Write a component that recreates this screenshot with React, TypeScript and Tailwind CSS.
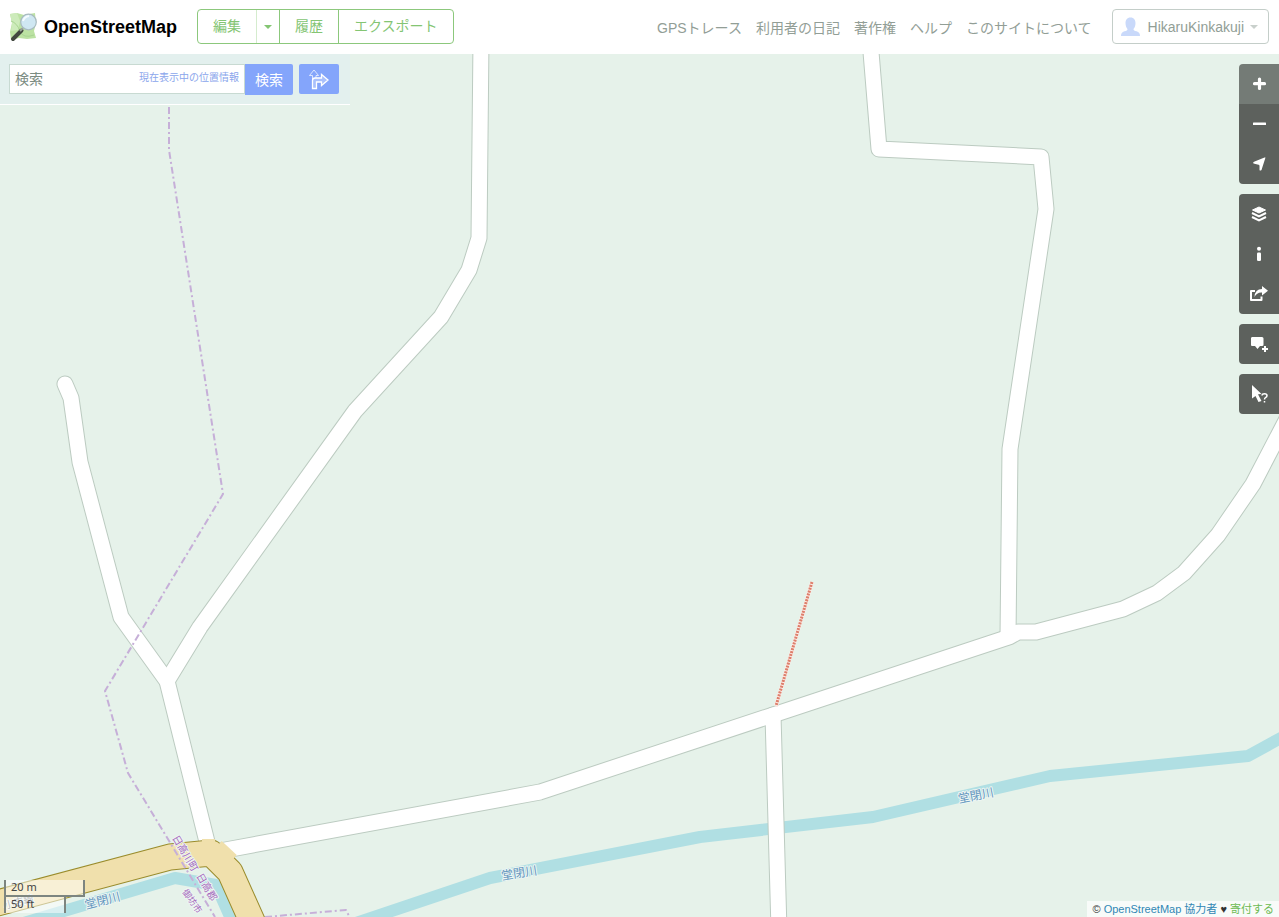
import type { ReactNode } from "react";

const navLinks = ["GPSトレース", "利用者の日記", "著作権", "ヘルプ", "このサイトについて"];

// minor roads, drawn twice: once as casing, once as fill
const roads = [
  "M481 40 L479 238 L469 270 L441 317 L355 411 L200 627 L167 681",
  "M65 384 L71 398 L80 462 L121 617 L167 681 L209 850",
  "M220 851 L540 792 L773 715 L1009 637 L1018 632 L1036 632 L1123 609 L1157 593 L1184 573 L1218 535 L1253 484 L1290 413",
  "M870 40 L879 149 L1041 157 L1046 209 L1010 449 L1008 637",
  "M773 715 L779 930",
];

const river = "M350 925 L490 878 L700 837 L873 817 L1050 776 L1248 756 L1290 733";
const stream = "M0 930 L175 878 L216 885 L236 930";
const highway = "M-10 905 L170 857 L211 853 L230 872 L256 930";

function MapCanvas() {
  return (
    <svg
      className="absolute inset-0 h-full w-full"
      viewBox="0 54 1279 863"
      preserveAspectRatio="xMinYMin slice"
      fill="none"
      strokeLinejoin="round"
      aria-label="地図"
    >
      <rect y="54" width="1279" height="863" fill="#e6f2ea" />

      {/* Water */}
      <g stroke="#b0dfe3" strokeWidth="12">
        <path d={river} />
        <path d={stream} />
      </g>

      {/* Roads */}
      <g strokeLinecap="round">
        {roads.map((d) => (
          <path key={d} d={d} stroke="#bccbc1" strokeWidth="17" />
        ))}
        {roads.map((d) => (
          <path key={d} d={d} stroke="#fff" strokeWidth="15" />
        ))}
      </g>
      <path d={highway} stroke="#9a8c2c" strokeWidth="27" />
      <path d={highway} stroke="#f0e0ac" strokeWidth="25" />
      <path d="M202 843 L215 843 M219 844 L234 858" stroke="#f0e0ac" strokeWidth="8" />

      {/* Footpath */}
      <path d="M812 582 L776 706" stroke="#fbeee8" strokeWidth="4" />
      <path d="M812 582 L776 706" stroke="#dd7f6c" strokeWidth="3" strokeDasharray="2 1" />

      {/* Boundaries */}
      <g stroke="#c6afd8" strokeWidth="2" strokeDasharray="7 3 2 3">
        <path d="M169 107 L169 150 L223 494 L105 691 L128 773 L215 917" />
        <path d="M265 917 L346 910 L351 920" />
      </g>

      <g
        className="font-['Noto_Sans_CJK_JP',sans-serif]"
        stroke="#eef6f3"
        strokeWidth="2"
        paintOrder="stroke"
        fontSize="12"
      >
        <g fill="#6497bf">
          <text x="502" y="880" transform="rotate(-9 502 880)">堂閉川</text>
          <text x="959" y="803" transform="rotate(-11 959 803)">堂閉川</text>
          <text x="86" y="909" transform="rotate(-14 86 909)">堂閉川</text>
        </g>
        <g fill="#a569bd" fontSize="10">
          <text x="172" y="838" transform="rotate(59 172 838)">日高川町</text>
          <text x="196" y="876" transform="rotate(59 196 876)">日高郡</text>
          <text x="182" y="892" transform="rotate(55 182 892)" fontSize="9">御坊市</text>
        </g>
        <text x="5" y="909" fill="#777" fontSize="10" transform="rotate(-14 5 909)">小吉線</text>
      </g>
    </svg>
  );
}

function Logo() {
  return (
    <svg width="30" height="32" viewBox="0 0 30 32" aria-hidden="true">
      <path d="M2 3 L9 2 L16 4 L27 2 L28 12 L26 20 L28 27 L19 28 L11 27 L3 29 L2 21 L4 12 Z" fill="#bce2a3" />
      <path d="M2 3 L9 2 L12 10 L10 19 L3 20 L4 12 Z" fill="#cdebbb" />
      <path d="M3 10 Q9 12 12 20 T26 24" fill="none" stroke="#a9d592" />
      <path d="M13.500 19.500 L5 28" stroke="#424840" strokeWidth="4" strokeLinecap="round" />
      <path d="M15 17 L12 20" stroke="#9aa39a" strokeWidth="2" />
      <circle cx="20.500" cy="11" r="7.800" fill="#cfe7f2" stroke="#a9bbc0" strokeWidth="1.200" />
      <path d="M15 10 Q16 6 21 5" fill="none" stroke="#f4fbff" strokeWidth="2" />
    </svg>
  );
}

function Caret({ className }: { className?: string }) {
  return (
    <svg className={className} width="8" height="4" viewBox="0 0 8 4" fill="currentColor" aria-hidden="true">
      <path d="M0 0 H8 L4 4 Z" />
    </svg>
  );
}

function Header() {
  return (
    <header className="flex h-[54px] shrink-0 items-center bg-white pr-2.5 pb-px pl-2">
      <h1>
        <a href="#" className="flex items-center gap-1.5 text-lg font-bold text-black">
          <Logo />
          OpenStreetMap
        </a>
      </h1>
      <div className="ml-5 flex h-[35px] shrink-0 divide-x divide-[#8cc87c] rounded-sm border border-[#8cc87c] text-sm text-[#84c573]">
        <button className="border-r-[#d5ecce] px-[15px] pb-0.5">編集</button>
        <button className="px-[7px]" aria-label="編集メニュー">
          <Caret />
        </button>
        <button className="px-[15px] pb-0.5">履歴</button>
        <button className="px-[15px] pb-0.5">エクスポート</button>
      </div>
      <nav className="ml-auto flex shrink-0 gap-3.5 pt-0.5 text-sm text-[#929e96]">
        {navLinks.map((label) => (
          <a key={label} href="#">
            {label}
          </a>
        ))}
      </nav>
      <button className="ml-5 flex h-[35px] shrink-0 items-center rounded-sm border border-[#c4cec9] pr-2.5 pl-2 text-sm text-[#929e96]">
        <svg className="mr-2" width="19" height="20" viewBox="0 0 19 20" fill="#c9d9fa" aria-hidden="true">
          <path d="M9.500 0.500 C6 0.500 4.500 3 4.500 6 C4.500 9 5.500 11 6.500 12 C6.500 13.500 5.500 13.800 3.500 14.300 C1 15 0 16.500 0 19 H19 C19 16.500 18 15 15.500 14.300 C13.500 13.800 12.500 13.500 12.500 12 C13.500 11 14.500 9 14.500 6 C14.500 3 13 0.500 9.500 0.500 Z" />
        </svg>
        HikaruKinkakuji
        <Caret className="ml-1.5 text-[#c9d0cc]" />
      </button>
    </header>
  );
}

function SearchPanel() {
  return (
    <form className="absolute top-0 left-0 flex h-[51px] w-[350px] items-start border-b border-white bg-[#e3f0ee] pt-2.5 pl-[9px] text-sm">
      <div className="flex h-[30px] w-[236px] items-center border border-[#c8dad2] bg-white px-[5px]">
        <input
          type="text"
          aria-label="検索"
          placeholder="検索"
          className="w-full min-w-0 flex-1 outline-none placeholder:text-[#7b8c82]"
        />
        <a href="#" className="mb-0.5 shrink-0 text-[10px] text-[#8aa6ec]">
          現在表示中の位置情報
        </a>
      </div>
      <button type="button" className="h-[31px] w-12 rounded-r-xs bg-[#84a5fb] text-white">
        検索
      </button>
      <button
        type="button"
        aria-label="経路"
        className="ml-1.5 flex h-[30px] w-10 items-center justify-center rounded-xs bg-[#84a5fb]"
      >
        <svg width="20" height="22" viewBox="0 0 20 22" fill="none" stroke="#fff" aria-hidden="true">
          <path d="M3.500 12 V7.500 H0.500 L5 2 L9.500 7.500 H7 V10" strokeOpacity="0.700" />
          <path
            d="M3.500 20.500 V12.500 Q3.500 10 6 10 H12.500 V6.500 L19 12 L12.500 17.500 V14 H7.500 V20.500 Z"
            fill="#a9c0fc"
            strokeWidth="1.300"
          />
        </svg>
      </button>
    </form>
  );
}

type Control = { label: string; icon: ReactNode; active?: boolean };

const controlGroups: Control[][] = [
  [
    { label: "拡大", active: true, icon: <path d="M10.500 5 V14.500 M5.500 9.700 H15.500" stroke="#fff" strokeWidth="3.200" strokeLinecap="round" /> },
    { label: "縮小", icon: <path d="M4.500 8.500 H16.500 Q17 8.500 17 9 V10.500 Q17 11 16.500 11 H4.500 Q4 11 4 10.500 V9 Q4 8.500 4.500 8.500 Z" /> },
    { label: "現在地を表示", icon: <path d="M16.500 3.500 L12.500 16 Q11 17 10.500 16 V11.500 Q10 10.500 8.500 10.500 L4.500 9.500 Q3.500 8.500 5 7.800 L15.500 3.500 Z" /> },
  ],
  [
    {
      label: "レイヤー",
      icon: (
        <>
          <path d="M10 3 L16.500 6 L10 9 L3.500 6 Z" strokeLinejoin="round" stroke="#fff" />
          <path d="M3 9 L10 12.500 L17 9 M3 13 L10 16.500 L17 13" fill="none" stroke="#fff" strokeWidth="2" />
        </>
      ),
    },
    {
      label: "凡例",
      icon: (
        <>
          <circle cx="10" cy="4.800" r="2" />
          <rect x="8" y="8.500" width="4" height="8.500" rx="1.200" />
        </>
      ),
    },
    {
      label: "共有",
      icon: (
        <>
          <path d="M6 7 H2 V16 H12.500 V12.500" fill="none" stroke="#fff" strokeWidth="2" strokeLinejoin="round" />
          <path d="M5.500 13 Q6 5 13 5 V2 L19 6.800 L13 11.500 V8.500 Q8 8 5.500 13 Z" />
        </>
      ),
    },
  ],
  [
    {
      label: "メモを追加",
      icon: (
        <>
          <path d="M3 3 H13 Q14.500 3 14.500 4.500 V11 Q14.500 12 13 12 H11 L8.500 15 L6 12 H3 Q2 12 2 11 V4.500 Q2 3 3 3 Z" />
          <path d="M16 12 V18 M13 15 H19" stroke="#fff" strokeWidth="2" />
        </>
      ),
    },
  ],
  [
    {
      label: "地物を検索",
      icon: (
        <>
          <path d="M3 1 L12.500 10 L9 10.300 L12.500 17 L9.500 18 L6.500 12 L3 14.500 Z" />
          <path d="M13 11.500 Q13.200 9.800 15.500 9.800 Q18 9.800 18 11.800 Q18 13 16.500 13.600 Q15.500 14 15.500 15.500 M15.500 17 V18.500" fill="none" stroke="#fff" strokeWidth="1.500" />
        </>
      ),
    },
  ],
];

function MapControls() {
  return (
    <div className="absolute top-2.5 right-0 flex flex-col gap-2.5">
      {controlGroups.map((group) => (
        <div key={group[0].label} className="flex flex-col overflow-hidden rounded-l">
          {group.map(({ label, icon, active }) => (
            <button
              key={label}
              aria-label={label}
              className={`flex size-10 items-center justify-center ${active ? "bg-[#747b76]" : "bg-[#5d615d]"}`}
            >
              <svg width="20" height="20" viewBox="0 0 20 20" fill="#fff" aria-hidden="true">
                {icon}
              </svg>
            </button>
          ))}
        </div>
      ))}
    </div>
  );
}

function ScaleBar() {
  return (
    <div className="absolute bottom-1 left-1 font-['Noto_Sans',sans-serif] text-[11px] leading-[14px] text-[#444]">
      <div className="h-[17px] w-[81px] border-2 border-t-0 border-[#7d8580] bg-white/50 pl-[5px]">20 m</div>
      <div className="-mt-0.5 h-[18px] w-[62px] border-2 border-b-0 border-[#7d8580] bg-white/50 pl-[5px]">50 ft</div>
    </div>
  );
}

export default function App() {
  return (
    <div className="flex h-screen flex-col overflow-hidden font-['Liberation_Sans','Noto_Sans_CJK_JP',sans-serif]">
      <Header />
      <main className="relative min-h-0 flex-1 overflow-hidden">
        <MapCanvas />
        <SearchPanel />
        <MapControls />
        <ScaleBar />
        <div className="absolute right-0 bottom-0 bg-white/70 px-[5px] text-[11px] leading-4 text-[#333]">
          ©{" "}
          <a href="#" className="text-[#3187b5]">
            OpenStreetMap 協力者
          </a>{" "}
          ♥{" "}
          <a href="#" className="text-[#6dba53]">
            寄付する
          </a>
        </div>
      </main>
    </div>
  );
}
